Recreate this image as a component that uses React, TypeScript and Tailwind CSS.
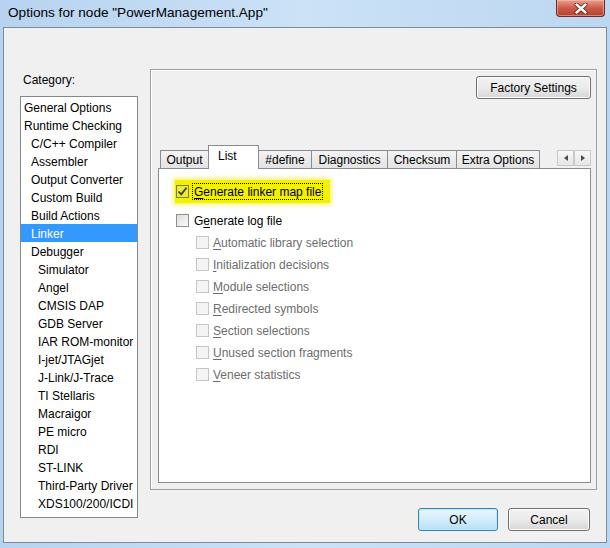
import React from 'react';

type Cat = { label: string; level: 0 | 1 | 2; selected?: boolean };

const categories: Cat[] = [
  { label: 'General Options', level: 0 },
  { label: 'Runtime Checking', level: 0 },
  { label: 'C/C++ Compiler', level: 1 },
  { label: 'Assembler', level: 1 },
  { label: 'Output Converter', level: 1 },
  { label: 'Custom Build', level: 1 },
  { label: 'Build Actions', level: 1 },
  { label: 'Linker', level: 1, selected: true },
  { label: 'Debugger', level: 1 },
  { label: 'Simulator', level: 2 },
  { label: 'Angel', level: 2 },
  { label: 'CMSIS DAP', level: 2 },
  { label: 'GDB Server', level: 2 },
  { label: 'IAR ROM-monitor', level: 2 },
  { label: 'I-jet/JTAGjet', level: 2 },
  { label: 'J-Link/J-Trace', level: 2 },
  { label: 'TI Stellaris', level: 2 },
  { label: 'Macraigor', level: 2 },
  { label: 'PE micro', level: 2 },
  { label: 'RDI', level: 2 },
  { label: 'ST-LINK', level: 2 },
  { label: 'Third-Party Driver', level: 2 },
  { label: 'XDS100/200/ICDI', level: 2 },
];

const indent = ['pl-[3px]', 'pl-[10px]', 'pl-[17px]'];

const tabs = [
  { label: 'Output', cls: 'w-[48px] border-r-0' },
  { label: 'List', cls: 'w-[51px]', active: true },
  { label: '#define', cls: 'w-[53px] border-l-0' },
  { label: 'Diagnostics', cls: 'w-[76px] border-l-0' },
  { label: 'Checksum', cls: 'w-[69px] border-l-0' },
  { label: 'Extra Options', cls: 'w-[83px] border-l-0' },
];

const subOptions: [string, string][] = [
  ['A', 'utomatic library selection'],
  ['I', 'nitialization decisions'],
  ['M', 'odule selections'],
  ['R', 'edirected symbols'],
  ['S', 'ection selections'],
  ['U', 'nused section fragments'],
  ['V', 'eneer statistics'],
];

const CheckBox = ({ checked, disabled, tint }: { checked?: boolean; disabled?: boolean; tint?: boolean }) => (
  <span
    className={`flex size-[13px] shrink-0 items-center justify-center border ${
      disabled
        ? 'border-[#c6c6c6] bg-[#f4f4f4]'
        : tint
          ? 'border-[#7d7d40] bg-[#ecec30]'
          : 'border-[#8e8f8f] bg-gradient-to-br from-[#dcdcdc] to-[#fbfbfb]'
    }`}
  >
    {checked && (
      <svg width="11" height="11" viewBox="0 0 11 11">
        <path d="M1.5 5.5 L4.2 8.3 L9.5 1.8" fill="none" stroke="#3b3b20" strokeWidth="1.8" />
      </svg>
    )}
  </span>
);

const Arrow = ({ dir }: { dir: 'l' | 'r' }) => (
  <span className="flex h-[16px] w-[17px] items-center justify-center border border-[#c9c9c9] bg-gradient-to-b from-[#f7f7f7] to-[#e6e6e6]">
    <svg width="4" height="6" viewBox="0 0 4 6">
      {dir === 'l' ? <path d="M4 0 L0 3 L4 6 Z" fill="#4a4a4a" /> : <path d="M0 0 L4 3 L0 6 Z" fill="#4a4a4a" />}
    </svg>
  </span>
);

export default function App() {
  return (
    <div
      className="flex h-[548px] w-[610px] flex-col overflow-hidden bg-gradient-to-r from-[#b7d3ef] via-[#cbe2f7] to-[#bcd7f1] text-[12px] leading-[15px] text-black"
      style={{ fontFamily: '"Liberation Sans", Arial, sans-serif' }}
    >
      {/* title bar */}
      <div className="flex h-[27px] shrink-0 items-start justify-between">
        <div className="pl-[8px] pt-[4px] text-[13.6px] leading-[17px]">Options for node "PowerManagement.App"</div>
        <div className="mr-[5px] flex h-[17px] w-[49px] items-center justify-center rounded-b-[4px] border border-t-0 border-[#6e2b22] bg-gradient-to-b from-[#e7a192] via-[#cc5b48] to-[#b5412f] shadow-[inset_0_0_0_1px_rgba(255,200,190,0.5)]">
          <svg width="14" height="11" viewBox="0 0 14 11">
            <path d="M2.5 1.5 L11.5 9.5 M11.5 1.5 L2.5 9.5" stroke="#5a1d16" strokeWidth="4" strokeLinecap="round" />
            <path d="M2.5 1.5 L11.5 9.5 M11.5 1.5 L2.5 9.5" stroke="#ffffff" strokeWidth="2.4" strokeLinecap="round" />
          </svg>
        </div>
      </div>

      {/* client area */}
      <div className="mx-[3px] flex h-[516px] items-start border border-[#7d8a98] bg-[#f0f0f0]">
        {/* category column */}
        <div className="ml-[16px] mt-[45px] flex flex-col">
          <div className="pl-[3px]">Category:</div>
          <div className="mt-[8px] h-[422px] w-[118px] border border-[#828790] bg-white pt-px">
            {categories.map((c) => (
              <div
                key={c.label}
                className={`flex h-[18px] items-center whitespace-nowrap pt-[2px] ${indent[c.level]} ${
                  c.selected ? 'bg-[#3399ff] text-white' : ''
                }`}
              >
                {c.label}
              </div>
            ))}
          </div>
        </div>

        {/* options column */}
        <div className="ml-[12px] mt-[41px] flex flex-col">
          <div className="flex h-[421px] w-[447px] flex-col border border-[#a0a0a0] pb-[6px] pl-[7px] pr-[5px] pt-[6px] shadow-[inset_1px_1px_0_#ffffff]">
            <button className="flex h-[23px] w-[115px] items-center justify-center self-end rounded-[3px] border border-[#707070] bg-gradient-to-b from-[#f2f2f2] via-[#ebebeb] to-[#d6d6d6] pt-[2px] shadow-[inset_0_0_0_1px_#fcfcfc]">
              Factory Settings
            </button>

            {/* tab strip */}
            <div className="mt-[46px] flex h-[23px] items-end pl-[2px]">
              {tabs.map((t) =>
                t.active ? (
                  <div
                    key={t.label}
                    className={`relative z-10 -mb-px flex h-[24px] ${t.cls} items-start justify-start border border-b-0 border-[#898c95] bg-white pl-[9px] pt-[3px]`}
                  >
                    {t.label}
                  </div>
                ) : (
                  <div
                    key={t.label}
                    className={`flex h-[18px] ${t.cls} items-center justify-center border border-b-0 border-[#898c95] bg-gradient-to-b from-[#f3f3f3] to-[#e3e3e3] pt-[2px]`}
                  >
                    {t.label}
                  </div>
                ),
              )}
              <div className="mb-[2px] ml-auto flex">
                <Arrow dir="l" />
                <Arrow dir="r" />
              </div>
            </div>

            {/* tab page */}
            <div className="flex flex-1 flex-col border border-[#898c95] bg-white">
              <div className="ml-[16px] mt-[11px] flex h-[23px] w-[155px] items-center bg-[#f4f100] pl-px shadow-[0_0_4px_2px_rgba(240,236,0,0.55)]">
                <CheckBox checked tint />
                <span className="ml-[3px] border border-dotted border-black px-px pt-px leading-[14px]">
                  <u className="underline-offset-2">G</u>enerate linker map file
                </span>
              </div>

              <div className="ml-[17px] mt-[8px] flex h-[18px] items-center">
                <CheckBox />
                <span className="ml-[5px] pt-[2px]">
                  G<u className="underline-offset-2">e</u>nerate log file
                </span>
              </div>

              <div className="mt-[2px] flex flex-col">
                {subOptions.map(([first, rest]) => (
                  <div key={first} className="ml-[37px] flex h-[22px] items-center">
                    <CheckBox disabled />
                    <span className="ml-[4px] pt-[2px] text-[#6d6d6d]">
                      <u className="underline-offset-2">{first}</u>
                      {rest}
                    </span>
                  </div>
                ))}
              </div>
            </div>
          </div>

          {/* dialog buttons */}
          <div className="mt-[18px] flex justify-end gap-[10px] pr-[7px]">
            <button className="flex h-[23px] w-[80px] items-center justify-center rounded-[3px] border border-[#3c7fb1] bg-gradient-to-b from-[#e9f6fd] via-[#d3eefb] to-[#b5e0f5] pt-[2px] shadow-[inset_0_0_0_1px_#bfeafe]">
              OK
            </button>
            <button className="flex h-[23px] w-[82px] items-center justify-center rounded-[3px] border border-[#707070] bg-gradient-to-b from-[#f2f2f2] via-[#ebebeb] to-[#d6d6d6] pt-[2px] shadow-[inset_0_0_0_1px_#fcfcfc]">
              Cancel
            </button>
          </div>
        </div>
      </div>
    </div>
  );
}
